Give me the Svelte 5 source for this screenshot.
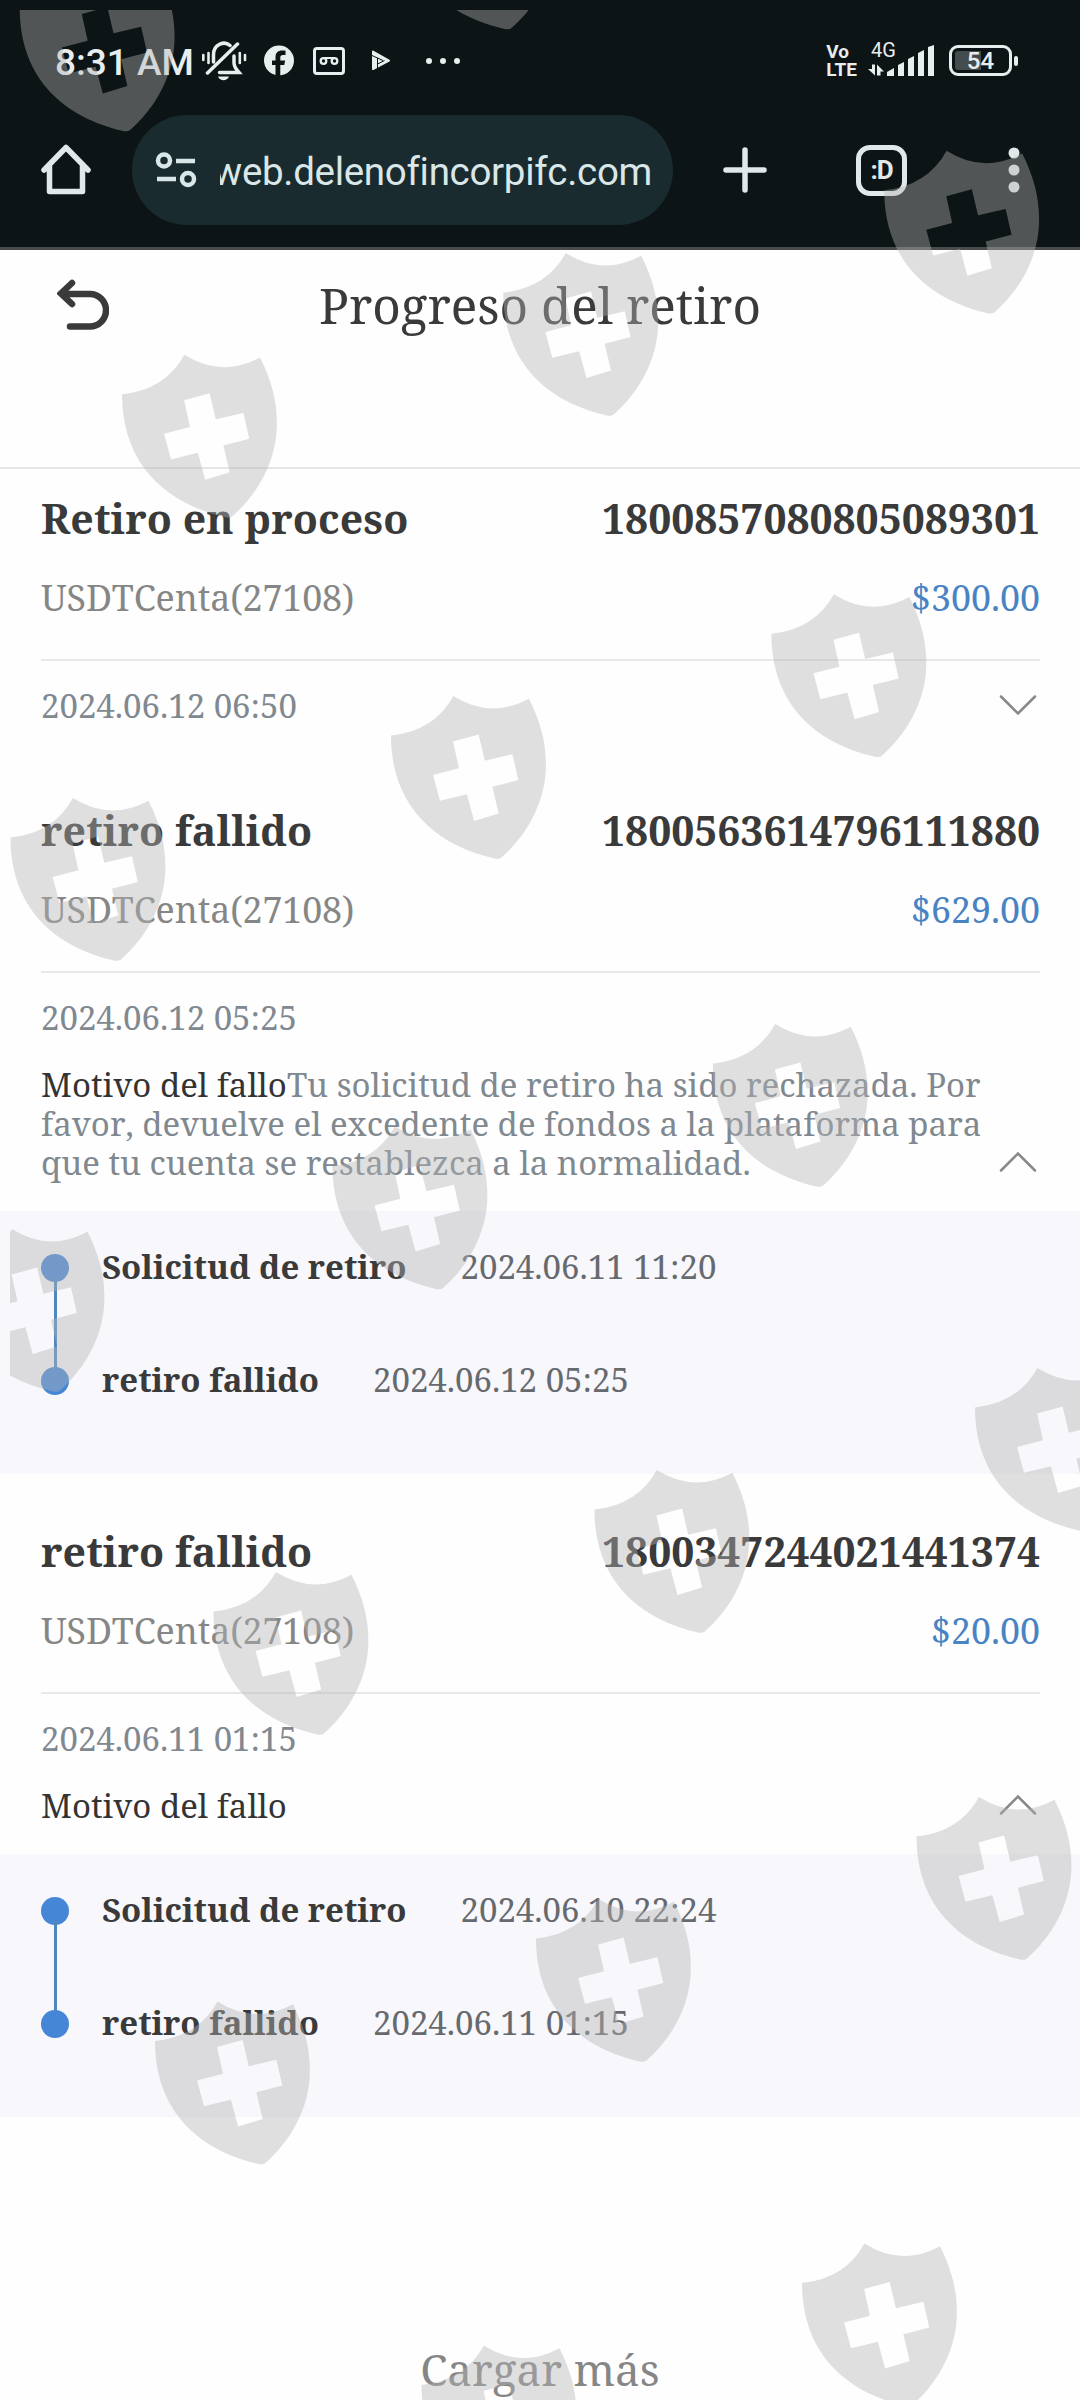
<script lang="ts">
  interface Step {
    label: string;
    date:  string;
  }

  interface Withdrawal {
    status:  string;
    id:      string;
    account: string;
    amount:  string;
    date:    string;
    failed:  boolean;
    reason:  string;
    steps:   Step[];
    open:    boolean;
  }

  let records = $state<Withdrawal[]>([
    {
      status: 'Retiro en proceso', id: '1800857080805089301',
      account: 'USDTCenta(27108)', amount: '$300.00', date: '2024.06.12 06:50',
      failed: false, reason: '', steps: [], open: false,
    },
    {
      status: 'retiro fallido', id: '1800563614796111880',
      account: 'USDTCenta(27108)', amount: '$629.00', date: '2024.06.12 05:25',
      failed: true,
      reason: 'Tu solicitud de retiro ha sido rechazada. Por favor, devuelve el excedente de fondos a la plataforma para que tu cuenta se restablezca a la normalidad.',
      steps: [
        { label: 'Solicitud de retiro', date: '2024.06.11 11:20' },
        { label: 'retiro fallido',      date: '2024.06.12 05:25' },
      ],
      open: true,
    },
    {
      status: 'retiro fallido', id: '1800347244021441374',
      account: 'USDTCenta(27108)', amount: '$20.00', date: '2024.06.11 01:15',
      failed: true, reason: '',
      steps: [
        { label: 'Solicitud de retiro', date: '2024.06.10 22:24' },
        { label: 'retiro fallido',      date: '2024.06.11 01:15' },
      ],
      open: true,
    },
  ]);

  // shield watermark positions
  const shields = [
    [19.7, -31.5], [401, -133.5],
    [122, 354.7], [503.3, 253], [884.2, 150.7],
    [771.4, 594.3], [391, 696], [10.5, 798],
    [712.8, 1024], [332.5, 1126.5], [-50.5, 1229],
    [975, 1368], [594.4, 1470], [213.5, 1572],
    [916.5, 1797], [536, 1899], [155, 2001.5],
    [802, 2243.5], [421.5, 2345.5],
  ];
</script>

<div class="screen">
  <header class="chrome">
    <div class="status">
      <span class="clock">8:31 AM</span>
      <svg width="46" height="42" viewBox="0 0 46 42" fill="none" stroke="#e8eeee" stroke-width="3.500" stroke-linecap="round">
        <path d="M2.300 15v5M7.500 13v10M44 15v5M38.800 13v10" stroke-width="2.600" />
        <path d="M12.500 22V15C12.500 3 24 1 29 5.500M33 16v7c0 4 2 6 5 9.500H18.500M6.500 33L36.500 4" />
        <path d="M17 36.500h11c-2 5-9 5-11 0z" fill="#e8eeee" stroke="none" />
      </svg>
      <svg class="fb" width="30" height="31" viewBox="0 0 30 31">
        <circle cx="15" cy="15.500" r="15" fill="#e8eeee" />
        <path d="M11.500 31V20H8v-4.500h3.500V12c0-4.500 3-6.500 6.500-6.500h3.500V10H19c-2 0-2.700 1-2.700 2.500v3h4.800l-.8 4.500h-4v11z" fill="#0c1416" />
      </svg>
      <svg class="voice" width="32" height="28" viewBox="0 0 32 28" fill="none" stroke="#e8eeee">
        <rect x="1.500" y="1.500" width="29" height="25" rx="2.500" stroke-width="3" />
        <circle cx="10.500" cy="14" r="2.800" stroke-width="2.300" />
        <circle cx="21.500" cy="14" r="2.800" stroke-width="2.300" />
        <path d="M10.500 11h11" stroke-width="2" />
      </svg>
      <svg class="play" width="18" height="21" viewBox="0 0 18 21">
        <path d="M1 1.500l16 9L1 19z" fill="#e8eeee" stroke="#e8eeee" stroke-width="2" stroke-linejoin="round" />
        <path d="M0 5.500l11 5M5.500 8v12M5.500 14l7-3.500" stroke="#0c1416" stroke-width="1" fill="none" />
      </svg>
      <svg class="more" width="34" height="8" viewBox="0 0 34 8" fill="#e8eeee">
        <circle cx="3" cy="4" r="3" /><circle cx="17" cy="4" r="3" /><circle cx="31" cy="4" r="3" />
      </svg>
      <span class="volte"><span>Vo</span><span>LTE</span></span>
      <span class="network">
        <span class="gen">4G</span>
        <svg width="67" height="31" viewBox="0 0 67 31" fill="#e8eeee">
          <path d="M4 19.500h3v11L0 24h4zM9 19.500l7 7h-3.500v4H9z" />
          <path d="M19 27l7-4v8h-7zM30 20l6-3v14h-6zM40 14l6-3v20h-6zM50 8l6-3v26h-6zM60 2l6-2v31h-6z" />
        </svg>
      </span>
      <span class="battery"><span class="level">54</span></span>
    </div>

    <div class="toolbar">
      <svg width="50" height="52" viewBox="0 0 50 52" fill="none" stroke="#e0e8e9" stroke-width="5.500" stroke-linecap="round" stroke-linejoin="round">
        <path d="M3 26L25 3.500 47 26M8.500 22v25.500h33V22" />
      </svg>
      <div class="omnibox">
        <svg width="42" height="36" viewBox="0 0 42 36" fill="none" stroke="#d9e7e9" stroke-width="4.500">
          <circle cx="9" cy="8.500" r="6" /><circle cx="33" cy="27" r="6" />
          <path d="M21 9h19M2 27h19" />
        </svg>
        <span class="url"><span>web.delenofincorpifc.com</span></span>
      </div>
      <svg class="plus" width="44" height="46" viewBox="0 0 44 46" stroke="#e0e8e9" stroke-width="5.500" stroke-linecap="round">
        <path d="M22 3v40M3 23h38" />
      </svg>
      <span class="tabs">:D</span>
      <svg class="kebab" width="12" height="46" viewBox="0 0 12 46" fill="#e0e8e9">
        <circle cx="6" cy="6" r="5.500" /><circle cx="6" cy="23" r="5.500" /><circle cx="6" cy="40" r="5.500" />
      </svg>
    </div>
  </header>

  <div class="titlebar">
    <svg width="52" height="52" viewBox="0 0 52 52" fill="none" stroke="#3a3a3a" stroke-width="6.500" stroke-linecap="round">
      <path d="M15 4L4 14.500 15 25M5 15h28a16 16.300 0 0 1 0 32.600H13" />
    </svg>
    <h1>Progreso del retiro</h1>
  </div>

  {#each records as r (r.id)}
    <section class="record">
      <div class="row head">
        <span class="name">{r.status}</span>
        <span class="number">{r.id}</span>
      </div>
      <div class="row account">
        <span class="centa">{r.account}</span>
        <span class="amount">{r.amount}</span>
      </div>
      <div class="detail" class:failed={r.failed}>
        <div class="info">
          <div class="date">{r.date}</div>
          {#if r.failed}
            <p class="reason"><b>Motivo del fallo</b>{r.reason}</p>
          {/if}
        </div>
        <button class="toggle" class:open={r.open} aria-label="Detalles" onclick={() => (r.open = !r.open)}>
          <svg width="38" height="22" viewBox="0 0 38 22" fill="none" stroke="#888" stroke-width="2.500" stroke-linecap="round">
            <path d="M2 2.500l17 17 17-17" />
          </svg>
        </button>
      </div>
    </section>
    {#if r.open && r.steps.length}
      <ol class="steps">
        {#each r.steps as step}
          <li>
            <i class="dot"></i>
            <span class="label">{step.label}</span>
            <span class="when">{step.date}</span>
          </li>
        {/each}
      </ol>
    {/if}
  {/each}

  <div class="load-more">Cargar más</div>

  <svg class="watermark" width="1080" height="2400" viewBox="0 0 1080 2400">
    <defs>
      <clipPath id="inset"><rect x="10" y="10" width="1070" height="2390" /></clipPath>
      <path
        id="shield"
        fill-rule="evenodd"
        d="M0 118Q125 105 181 0Q288 70 400 8C435 80 449 140 449 206C449 320 390 420 320 482Q314 488 300 485C130 445 0 330 0 118ZM180 136L254 115 272 193 352 174 369 251 294 271 312 351 241 373 220 293 142 313 122 236 197 216Z"
      />
    </defs>
    <g clip-path="url(#inset)">
      {#each shields as [x, y]}
        <use href="#shield" transform="translate({x} {y}) scale(.3450 .3350)" />
      {/each}
    </g>
  </svg>
</div>

<style>
  :global(body) {
    background: #fefefe;
  }

  .screen {
    position: relative;
    width: 1080px;
    height: 2400px;
    overflow: hidden;
    background: #fefefe;
    color: #3a3a3a;
    font-family: "Noto Serif", "DejaVu Serif", serif;
    font-kerning: none;
  }

  .chrome {
    box-sizing: border-box;
    height: 250px;
    background: #0c1416;
    border-bottom: 3px solid #4a4b4c;
    font-family: Roboto, sans-serif;
  }

  .status {
    display: flex;
    align-items: center;
    box-sizing: border-box;
    height: 115px;
    padding: 6px 62px 0 55px;
    color: #e8eeee;
  }

  .clock {
    width: 146px;
    padding-top: 4px;
    font-size: 37px;
    font-weight: 500;
    white-space: nowrap;
  }

  .fb {
    margin-left: 17px;
  }

  .voice {
    margin-left: 19px;
  }

  .play {
    margin-left: 27px;
  }

  .more {
    margin-left: 36px;
  }

  .volte {
    display: flex;
    flex-direction: column;
    margin-left: auto;
    font: 700 19px/18px Roboto, sans-serif;
  }

  .network {
    display: grid;
    margin-left: 11px;
  }

  .network > * {
    grid-area: 1 / 1;
  }

  .gen {
    margin: -6px 0 0 3px;
    font-size: 20px;
    line-height: 22px;
  }

  .battery {
    display: flex;
    align-items: center;
    margin-left: 14px;
  }

  .battery::after {
    content: "";
    width: 4px;
    height: 10px;
    margin-left: 2px;
    border-radius: 2px;
    background: #e8eeee;
  }

  .level {
    box-sizing: border-box;
    width: 63px;
    height: 31px;
    padding: 3px;
    border: 3px solid #e8eeee;
    border-radius: 9px;
    background: linear-gradient(90deg, #454c4e 50%, transparent 50%) content-box;
    font-size: 24px;
    font-weight: 500;
    line-height: 20px;
    text-align: center;
  }

  .toolbar {
    display: flex;
    align-items: center;
    height: 110px;
    padding-left: 41px;
  }

  .omnibox {
    display: flex;
    align-items: center;
    box-sizing: border-box;
    width: 541px;
    height: 110px;
    margin-left: 41px;
    padding: 0 21px 0 23px;
    border-radius: 55px;
    background: #192b2e;
  }

  .url {
    display: flex;
    flex: 1;
    justify-content: flex-end;
    margin-left: 23px;
    padding-top: 4px;
    overflow: hidden;
    color: #d9e7e9;
    font-size: 38.500px;
    letter-spacing: -0.300px;
    line-height: 50px;
    white-space: nowrap;
  }

  .plus {
    margin-left: 50px;
  }

  .tabs {
    box-sizing: border-box;
    width: 51px;
    height: 51px;
    margin-left: 89px;
    border: 5px solid #e0e8e9;
    border-radius: 14px;
    color: #e0e8e9;
    font-size: 26px;
    font-weight: 700;
    letter-spacing: -1px;
    line-height: 40px;
    text-align: center;
  }

  .kebab {
    margin-left: 101px;
  }

  .titlebar {
    display: grid;
    grid-template-columns: 52px 1fr 52px;
    align-items: center;
    box-sizing: border-box;
    height: 219px;
    padding: 0 57px 108px;
    border-bottom: 2px solid #e6e6e6;
  }

  h1 {
    margin: 0;
    font-size: 49.500px;
    font-weight: 400;
    line-height: 60px;
    text-align: center;
    white-space: nowrap;
  }

  .record {
    padding: 19px 40px 0 41px;
  }

  .row {
    display: flex;
    justify-content: space-between;
    line-height: 60px;
    white-space: nowrap;
  }

  .head {
    font-size: 41px;
    font-weight: 700;
  }

  .name {
    letter-spacing: 0.120px;
  }

  .number {
    font-size: 40.800px;
  }

  .account {
    padding: 19px 0 32px;
    border-bottom: 2px solid #e8e8e8;
    font-size: 35.800px;
  }

  .centa {
    color: #868686;
    letter-spacing: -0.100px;
  }

  .amount {
    color: #4a83c4;
  }

  .detail {
    display: flex;
    align-items: flex-end;
    justify-content: space-between;
    padding: 25px 0 55px;
  }

  .detail.failed {
    padding-bottom: 29px;
  }

  .info {
    width: 950px;
    color: #808890;
    font-size: 33px;
  }

  .date {
    line-height: 40px;
  }

  .reason {
    margin: 27px 0 0;
    line-height: 39px;
  }

  .reason b {
    color: #333;
    font-weight: 400;
  }

  .toggle {
    display: flex;
    padding: 0 3px 10px 0;
    border: 0;
    background: none;
  }

  .toggle.open {
    padding-bottom: 9px;
  }

  .toggle.open svg {
    transform: rotate(180deg);
  }

  .steps {
    box-sizing: border-box;
    height: 263px;
    margin: 0 0 28px;
    padding: 37px 41px 0;
    background: #f7f7fc;
    list-style: none;
  }

  .steps li {
    display: flex;
    position: relative;
    align-items: center;
    height: 40px;
    margin-bottom: 73px;
    font-size: 33px;
    white-space: nowrap;
  }

  .steps span {
    padding-bottom: 3px;
  }

  .dot {
    width: 28px;
    height: 28px;
    border-radius: 50%;
    background: #4686d6;
  }

  .steps li:first-child::before {
    content: "";
    position: absolute;
    top: 30px;
    left: 12.500px;
    width: 3px;
    height: 95px;
    background: #5088bd;
  }

  .label {
    margin-left: 33px;
    font-weight: 700;
  }

  .when {
    margin-left: 54px;
    color: #666a6e;
  }

  .load-more {
    margin-top: 194px;
    padding-top: 28px;
    color: #868686;
    font-size: 44px;
    line-height: 60px;
    text-align: center;
  }

  .watermark {
    position: absolute;
    inset: 0;
    fill: rgba(180, 180, 180, 0.41);
    pointer-events: none;
  }
</style>
